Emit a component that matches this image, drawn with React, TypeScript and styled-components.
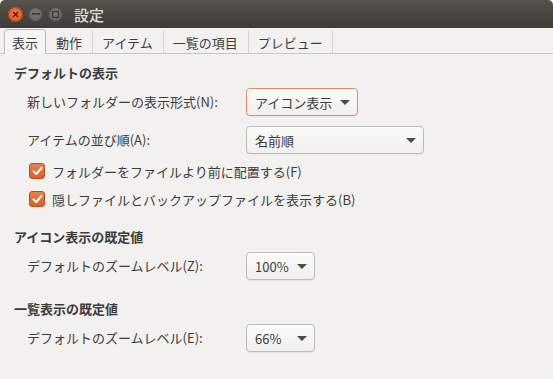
import React from 'react';
import styled, { createGlobalStyle } from 'styled-components';

const GlobalStyle = createGlobalStyle`
  html, body {
    margin: 0;
    padding: 0;
    background: #f2f1f0;
  }
  body {
    font-family: "Noto Sans CJK JP", "Noto Sans", sans-serif;
    font-size: 13px;
    color: #3c3c3c;
  }
`;

const Window = styled.div`
  width: 553px;
  height: 379px;
  background: #f2f1f0;
  display: flex;
  flex-direction: column;
  overflow: hidden;
`;

const TitleBar = styled.div`
  height: 28px;
  flex: none;
  display: flex;
  align-items: center;
  gap: 5px;
  padding-left: 8px;
  background: linear-gradient(#56534c, #3c3b37);
  border-radius: 5px 5px 0 0;
`;

const WinButton = styled.div<{ $close?: boolean }>`
  width: 15px;
  height: 15px;
  flex: none;
  border-radius: 50%;
  display: flex;
  align-items: center;
  justify-content: center;
  background: ${p => p.$close
    ? 'radial-gradient(circle at 50% 40%, #f37b4e, #df4a16)'
    : 'radial-gradient(circle at 50% 40%, #7a7873, #5c5b56)'};
  box-shadow: inset 0 0 0 1px ${p => (p.$close ? '#b8400f' : '#45443f')};
`;

const Title = styled.div`
  margin-left: 6px;
  color: #dfdbd2;
  font-size: 15px;
  font-weight: 500;
`;

const TabBar = styled.div`
  flex: none;
  display: flex;
  align-items: flex-end;
  height: 24px;
  padding: 0 0 0 4px;
  margin-top: 1px;
  border-bottom: 1px solid #c8c6c3;
`;

const Tab = styled.div<{ $active?: boolean }>`
  height: ${p => (p.$active ? '24px' : '22px')};
  padding: 0 ${p => (p.$active ? '7px' : '9px')};
  display: flex;
  align-items: center;
  font-size: 13px;
  color: #3c3c3c;
  border: 1px solid ${p => (p.$active ? '#bcbab6' : 'transparent')};
  border-bottom: none;
  border-radius: ${p => (p.$active ? '4px 4px 0 0' : '0')};
  background: ${p => (p.$active ? '#f6f5f4' : 'transparent')};
  margin-bottom: ${p => (p.$active ? '-1px' : '0')};
  & + & + & {
    border-left: 1px solid #d6d4d1;
  }
  &:last-child {
    border-right: 1px solid #d6d4d1;
  }
`;

const Content = styled.div`
  padding: 9px 14px 0 14px;
  display: flex;
  flex-direction: column;
`;

const SectionTitle = styled.div`
  font-weight: 700;
  font-size: 13px;
  height: 20px;
  line-height: 20px;
  margin-bottom: 5px;
`;

const Row = styled.div`
  display: grid;
  grid-template-columns: 219px auto;
  align-items: center;
  padding-left: 13px;
  height: 28px;
  & + & {
    margin-top: 10px;
  }
`;

const Label = styled.span`
  line-height: 18px;
  white-space: nowrap;
`;

const Combo = styled.div<{ $width: number; $focus?: boolean }>`
  width: ${p => p.$width}px;
  height: 28px;
  box-sizing: border-box;
  display: flex;
  align-items: center;
  justify-content: space-between;
  white-space: nowrap;
  padding: 0 7px 0 8px;
  border-radius: 4px;
  border: 1px solid ${p => (p.$focus ? '#e28b6b' : '#bcbab6')};
  background: linear-gradient(#fbfbfa, #f0efee);
  box-shadow: 0 1px 0 rgba(0, 0, 0, 0.04);
`;

const Arrow = styled.span`
  flex: none;
  width: 0;
  height: 0;
  border-left: 5px solid transparent;
  border-right: 5px solid transparent;
  border-top: 5px solid #4c4c4c;
  margin-left: 5px;
`;

const CheckList = styled.div`
  display: flex;
  flex-direction: column;
  gap: 8px;
  margin-top: 7px;
`;

const CheckRow = styled.label`
  display: flex;
  align-items: center;
  padding-left: 15px;
  height: 20px;
`;

const CheckBox = styled.span`
  width: 16px;
  height: 16px;
  box-sizing: border-box;
  border-radius: 3px;
  background: linear-gradient(#e8804f, #d9602c);
  border: 1px solid #b8501f;
  display: flex;
  align-items: center;
  justify-content: center;
  margin-right: 7px;
`;

const Section = styled.div<{ $gap: number }>`
  margin-top: ${p => p.$gap}px;
`;

const Check = () => (
  <CheckBox>
    <svg width="11" height="10" viewBox="0 0 11 10">
      <path d="M1.5 5.2 L4.3 8 L9.5 1.8" fill="none" stroke="#fff" strokeWidth="2" strokeLinecap="round" strokeLinejoin="round" />
    </svg>
  </CheckBox>
);

const App = () => {
  return (
    <Window>
      <GlobalStyle />
      <TitleBar>
        <WinButton $close>
          <svg width="7" height="7" viewBox="0 0 7 7">
            <path d="M1 1 L6 6 M6 1 L1 6" stroke="#3a1a0c" strokeWidth="1.3" />
          </svg>
        </WinButton>
        <WinButton>
          <svg width="8" height="2" viewBox="0 0 8 2">
            <rect x="0" y="0" width="8" height="1.6" fill="#3a3935" />
          </svg>
        </WinButton>
        <WinButton>
          <svg width="7" height="7" viewBox="0 0 7 7">
            <rect x="0.6" y="0.6" width="5.8" height="5.8" fill="none" stroke="#3a3935" strokeWidth="1.2" />
          </svg>
        </WinButton>
        <Title>設定</Title>
      </TitleBar>
      <TabBar>
        <Tab $active>表示</Tab>
        <Tab>動作</Tab>
        <Tab>アイテム</Tab>
        <Tab>一覧の項目</Tab>
        <Tab>プレビュー</Tab>
      </TabBar>
      <Content>
        <Section $gap={0}>
          <SectionTitle>デフォルトの表示</SectionTitle>
          <Row>
            <Label>新しいフォルダーの表示形式(N):</Label>
            <Combo $width={112} $focus>アイコン表示<Arrow /></Combo>
          </Row>
          <Row>
            <Label>アイテムの並び順(A):</Label>
            <Combo $width={178}>名前順<Arrow /></Combo>
          </Row>
          <CheckList>
            <CheckRow><Check />フォルダーをファイルより前に配置する(F)</CheckRow>
            <CheckRow><Check />隠しファイルとバックアップファイルを表示する(B)</CheckRow>
          </CheckList>
        </Section>
        <Section $gap={18}>
          <SectionTitle>アイコン表示の既定値</SectionTitle>
          <Row>
            <Label>デフォルトのズームレベル(Z):</Label>
            <Combo $width={69}>100%<Arrow /></Combo>
          </Row>
        </Section>
        <Section $gap={19}>
          <SectionTitle>一覧表示の既定値</SectionTitle>
          <Row>
            <Label>デフォルトのズームレベル(E):</Label>
            <Combo $width={69}>66%<Arrow /></Combo>
          </Row>
        </Section>
      </Content>
    </Window>
  );
};

export default App;
